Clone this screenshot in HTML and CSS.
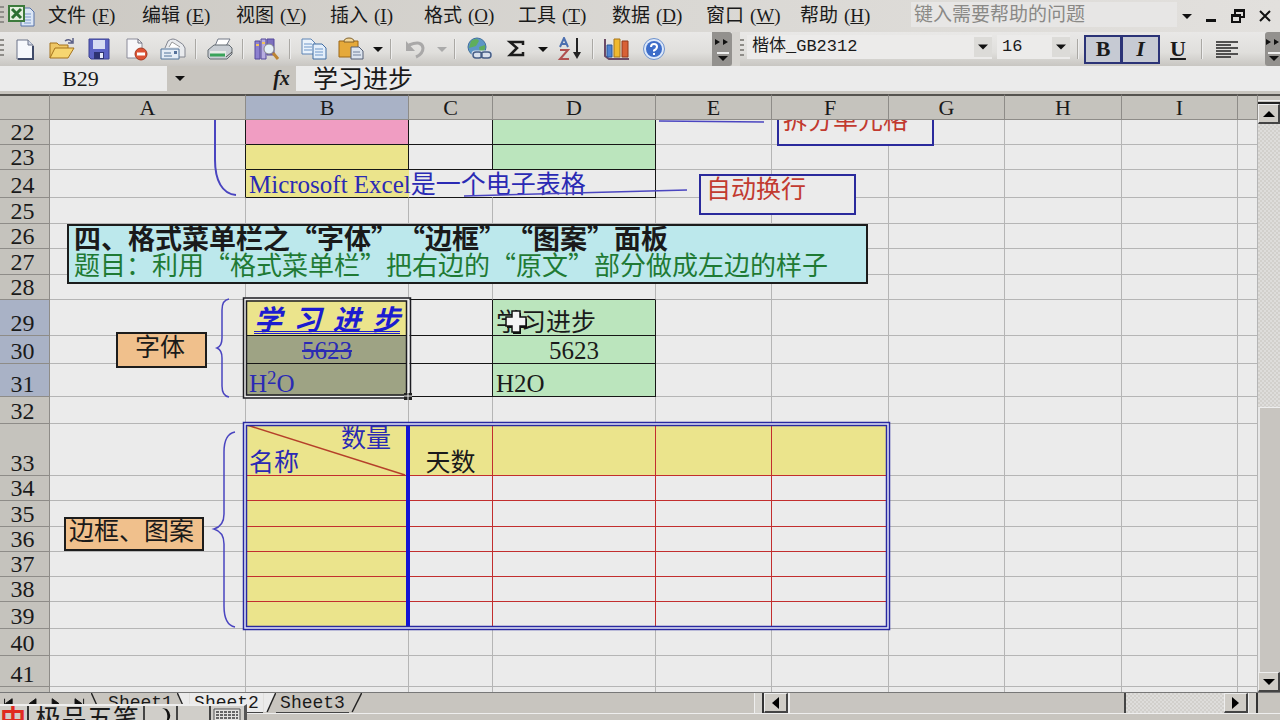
FILE: index.html
```html
<!DOCTYPE html>
<html lang="zh-CN">
<head>
<meta charset="utf-8">
<title>Microsoft Excel</title>
<link rel="stylesheet" href="styles.css">
</head>
<body>
<svg class="defs" width="0" height="0" aria-hidden="true">
  <symbol id="down" viewBox="0 0 10 5"><path d="M0 0h10L5 5z"/></symbol>
</svg>
<header class="menubar">
  <span class="grip"></span>
  <svg class="app-icon" viewBox="0 0 27 22"><path d="M13 3h9l4 4v14H13z" fill="#dbe6f5" stroke="#5672a8"/><path d="M16 9h7M16 12h7M16 15h7M16 18h7" stroke="#7d9acb"/><path d="M1 1h15v15H1z" fill="#e4efe0" stroke="#3c7a3c" stroke-width="2"/><path d="M4 4l9 9M13 4l-9 9" stroke="#2c6f32" stroke-width="3"/></svg>
  <nav class="menus">
    <button>文件<span>(<u>F</u>)</span></button><button>编辑<span>(<u>E</u>)</span></button><button>视图<span>(<u>V</u>)</span></button><button>插入<span>(<u>I</u>)</span></button><button>格式<span>(<u>O</u>)</span></button><button>工具<span>(<u>T</u>)</span></button><button>数据<span>(<u>D</u>)</span></button><button>窗口<span>(<u>W</u>)</span></button><button>帮助<span>(<u>H</u>)</span></button>
  </nav>
  <input class="help" aria-label="帮助" placeholder="键入需要帮助的问题">
  <button class="drop" aria-label="帮助列表"><svg><use href="#down"/></svg></button>
  <button class="win" aria-label="最小化"><svg viewBox="0 0 14 14"><path d="M2 11.5h10" stroke-width="3"/></svg></button>
  <button class="win" aria-label="还原"><svg viewBox="0 0 14 14"><path d="M4 5V1h9v7H9M4 2h9" stroke-width="2"/><path d="M1 6h8v7H1zM1 7h8" stroke-width="2"/></svg></button>
  <button class="win" aria-label="关闭"><svg viewBox="0 0 14 14"><path d="M2 2l10 10M12 2L2 12" stroke-width="2"/></svg></button>
</header>

<div class="toolbars">
  <div class="toolbar standard">
    <span class="grip"></span>
    <button class="tool" aria-label="新建"><svg viewBox="0 0 24 24"><path d="M4 3h11l5 5v14H4z" fill="#f6f8fc" stroke="#6b7288"/><path d="M15 3v5h5" fill="#cfd6e6" stroke="#6b7288"/><path d="M20 9v13H5" fill="none" stroke="#3f4a68" stroke-width="2"/></svg></button>
    <button class="tool" aria-label="打开"><svg viewBox="0 0 26 24"><path d="M1 21V6h7l2 2h9v4" fill="#efc765" stroke="#a5731d"/><path d="M1 21l5-10h19l-6 10z" fill="#f7d670" stroke="#a5731d"/><path d="M16 4q4-3 7 1m1-4v5h-5" fill="none" stroke="#5a5f86" stroke-width="1.5"/></svg></button>
    <button class="tool" aria-label="保存"><svg viewBox="0 0 24 24"><path d="M2 2h20v20H4l-2-2z" fill="#5c63c4" stroke="#3c4292"/><path d="M6 3h12v9H6z" fill="#d7dcf3"/><path d="M7 15h10v7H7z" fill="#2d3272"/><path d="M13 16h3v5h-3z" fill="#e4e8f8"/></svg></button>
    <button class="tool" aria-label="权限"><svg viewBox="0 0 24 24"><path d="M3 2h11l4 4v15H3z" fill="#f7f7fa" stroke="#8b8b99"/><path d="M14 2v4h4" fill="none" stroke="#6d6d7d"/><circle cx="17" cy="17" r="6" fill="#dd5335" stroke="#a53a22"/><path d="M13 17h8" stroke="#fff" stroke-width="3"/></svg></button>
    <button class="tool" aria-label="电子邮件"><svg viewBox="0 0 26 24"><path d="M5 11l3-7q5-4 10 0 6 3 7 7v9H9" fill="#e9ebee" stroke="#82858f"/><path d="M9 10l3-5 8 5" fill="#fff" stroke="#999"/><path d="M1 12h18v10H1z" fill="#e5edf6" stroke="#53749a"/><path d="M4 16h7M4 19h8" stroke="#53749a"/><path d="M14 14h3v3h-3z" fill="#54719a"/></svg></button>
    <i class="sep"></i>
    <button class="tool" aria-label="打印"><svg viewBox="0 0 26 24"><path d="M8 9l3-7h12l-4 7" fill="#fff" stroke="#727986"/><path d="M1 13l6-5h15l3 3v6l-5 5H3l-2-2z" fill="#c9ced4" stroke="#626a70"/><path d="M3 14h16v5H3z" fill="#e7ebe7"/><path d="M3 18h15" stroke="#39a35a" stroke-width="3"/><path d="M19 20l6-5" stroke="#555" /></svg></button>
    <i class="sep"></i>
    <button class="tool" aria-label="信息检索"><svg viewBox="0 0 26 24"><path d="M1 4h5v18H1z" fill="#8d80cf" stroke="#55499b"/><path d="M7 2h5v20H7z" fill="#b7addf" stroke="#55499b"/><path d="M13 2h7v16h-7z" fill="#7d70be" stroke="#55499b"/><path d="M2 8h3M8 6h3" stroke="#f2c35c" stroke-width="2"/><circle cx="15" cy="12" r="5" fill="#e5f0f7" stroke="#888"/><path d="M19 16l5 6" stroke="#bc8432" stroke-width="3"/></svg></button>
    <i class="sep"></i>
    <button class="tool" aria-label="复制"><svg viewBox="0 0 26 24"><path d="M1 2h9l4 4v11H1z" fill="#eaf2fb" stroke="#5f84b4"/><path d="M3 7h8M3 10h8M3 13h8" stroke="#6f97c9"/><path d="M12 7h9l4 4v11H12z" fill="#e3eefa" stroke="#3f6ca3"/><path d="M14 12h8M14 15h8M14 18h8" stroke="#6f97c9"/></svg></button>
    <button class="tool" aria-label="粘贴"><svg viewBox="0 0 26 24"><path d="M1 4h19v16H1z" fill="#e5a93a" stroke="#9b6717"/><path d="M6 5q0-4 5-4t5 4z" fill="#f3d79a" stroke="#80612a"/><path d="M13 10h8l4 4v8H13z" fill="#dce4ee" stroke="#545f75"/><path d="M15 15h7M15 18h8" stroke="#72809a"/></svg></button>
    <button class="drop" aria-label="粘贴选项"><svg><use href="#down"/></svg></button>
    <i class="sep"></i>
    <button class="tool" aria-label="撤消"><svg viewBox="0 0 24 24"><path d="M6 8q13-5 14 3 0 6-7 9" fill="none" stroke="#a9a8a8" stroke-width="3"/><path d="M3 4v10h9z" fill="#a9a8a8"/></svg></button>
    <button class="drop dim" aria-label="撤消列表"><svg><use href="#down"/></svg></button>
    <i class="sep"></i>
    <button class="tool" aria-label="超链接"><svg viewBox="0 0 26 24"><circle cx="11" cy="10" r="9" fill="#5e96c6" stroke="#41719e"/><path d="M5 4q6-4 8 0l-3 5-7 2zM13 10l6-2q1 6-5 8z" fill="#5fae5c"/><path d="M9 17h9m-1 0h7" stroke="#d8e0ec" stroke-width="7" stroke-linecap="round"/><rect x="7" y="15" width="9" height="6" rx="3" fill="none" stroke="#465e86" stroke-width="1.5"/><rect x="15" y="15" width="10" height="6" rx="3" fill="none" stroke="#465e86" stroke-width="1.5"/></svg></button>
    <button class="tool" aria-label="自动求和"><svg viewBox="0 0 24 24"><path d="M19 8V5H6l7 6-7 7h13v-3" fill="none" stroke="#1b1b1b" stroke-width="2.5"/></svg></button>
    <button class="drop" aria-label="函数列表"><svg><use href="#down"/></svg></button>
    <button class="tool" aria-label="升序排序"><svg viewBox="0 0 26 24"><path d="M3 10l4-9 4 9M4 7h6" fill="none" stroke="#4d70b0" stroke-width="2"/><path d="M3 13h8l-8 9h9" fill="none" stroke="#b15050" stroke-width="2"/><path d="M20 1v18" stroke="#222" stroke-width="2"/><path d="M16 15h8l-4 7z" fill="#222"/></svg></button>
    <i class="sep"></i>
    <button class="tool" aria-label="图表向导"><svg viewBox="0 0 26 24"><path d="M1 2v17l4 3h20" fill="none" stroke="#6b4a66" stroke-width="2"/><path d="M3 8h5v12H3z" fill="#4f83d2" stroke="#2b579a"/><path d="M10 2h6v18h-6z" fill="#f0b92f" stroke="#a7741a"/><path d="M18 4h6v16h-6z" fill="#d86137" stroke="#943a1b"/></svg></button>
    <button class="tool" aria-label="帮助"><svg viewBox="0 0 24 24"><circle cx="12" cy="12" r="10.5" fill="#dce8fa" stroke="#6d91cc"/><circle cx="12" cy="12" r="8" fill="#3d6dc9"/><path d="M9 10q0-3 3-3t3 2.500-3 4v1" fill="none" stroke="#fff" stroke-width="2"/><path d="M12 16v2" stroke="#fff" stroke-width="2"/></svg></button>
    <button class="cap" aria-label="工具栏选项"><svg viewBox="0 0 16 28"><path d="M1 4l5 3-5 3zM9 4l5 3-5 3z" fill="#111"/><path d="M3 18h12" stroke="#eee" stroke-width="2"/><path d="M4 21h10l-5 5z" fill="#111"/></svg></button>
  </div>
  <div class="toolbar format">
    <span class="grip"></span>
    <span class="combo face"><select aria-label="字体"><option>楷体_GB2312</option></select><svg><use href="#down"/></svg></span>
    <span class="combo size"><select aria-label="字号"><option>16</option></select><svg><use href="#down"/></svg></span>
    <i class="sep"></i>
    <button class="style on bold">B</button><button class="style on italic">I</button><button class="style under">U</button>
    <i class="sep"></i>
    <button class="tool align" aria-label="左对齐"><svg viewBox="0 0 24 24"><path d="M1 5h22M1 8h15M1 11h22M1 14h15M1 17h22M1 20h15" stroke="#222" stroke-width="1.500"/></svg></button>
    <button class="cap" aria-label="工具栏选项"><svg viewBox="0 0 16 28"><path d="M1 4l5 3-5 3zM9 4l5 3-5 3z" fill="#111"/><path d="M3 18h12" stroke="#eee" stroke-width="2"/><path d="M4 21h10l-5 5z" fill="#111"/></svg></button>
  </div>
</div>

<div class="formula">
  <input class="name" aria-label="名称框" value="B29">
  <button class="drop" aria-label="名称列表"><svg><use href="#down"/></svg></button>
  <button class="fx" aria-label="插入函数"><i>fx</i></button>
  <input class="expr" aria-label="编辑栏" value="学习进步">
</div>

<main class="workspace">
  <div class="sheet">
    <table>
      <colgroup><col class="c0"><col class="ca"><col class="cb"><col class="cc"><col class="cb"><col class="ce"><col class="cf"><col class="ce"><col class="cf"><col class="ce"><col></colgroup>
      <thead><tr class="h26"><th></th><th>A</th><th class="sel">B</th><th>C</th><th>D</th><th>E</th><th>F</th><th>G</th><th>H</th><th>I</th><th></th></tr></thead>
      <tbody>
        <tr class="h25"><th>22</th><td class="kr"></td><td class="k pink"></td><td class="k"></td><td class="k green"></td><td></td><td></td><td></td><td></td><td></td><td></td></tr>
        <tr class="h25"><th>23</th><td class="kr"></td><td class="k yellow"></td><td class="k"></td><td class="k green"></td><td></td><td></td><td></td><td></td><td></td><td></td></tr>
        <tr class="h28"><th>24</th><td class="kr"></td><td class="kb open yellow blue formula-text">Microsoft Excel是一个电子表格</td><td class="kb open"></td><td class="k"></td><td></td><td></td><td></td><td></td><td></td><td></td></tr>
        <tr class="h26"><th>25</th><td></td><td></td><td></td><td></td><td></td><td></td><td></td><td></td><td></td><td></td></tr>
        <tr class="h25"><th>26</th><td></td><td></td><td></td><td></td><td></td><td></td><td></td><td></td><td></td><td></td></tr>
        <tr class="h26"><th>27</th><td></td><td></td><td></td><td></td><td></td><td></td><td></td><td></td><td></td><td></td></tr>
        <tr class="h25"><th>28</th><td></td><td class="kb"></td><td class="kb"></td><td class="kb"></td><td></td><td></td><td></td><td></td><td></td><td></td></tr>
        <tr class="h36"><th class="sel">29</th><td class="kr"></td><td class="k yellow blue fancy">学习进步</td><td class="k"></td><td class="k green">学习进步</td><td></td><td></td><td></td><td></td><td></td><td></td></tr>
        <tr class="h28"><th class="sel">30</th><td class="kr"></td><td class="k shade blue mid"><s>5623</s></td><td class="k"></td><td class="k green mid">5623</td><td></td><td></td><td></td><td></td><td></td><td></td></tr>
        <tr class="h33"><th class="sel">31</th><td class="kr"></td><td class="k shade blue">H<sup>2</sup>O</td><td class="k"></td><td class="k green">H2O</td><td></td><td></td><td></td><td></td><td></td><td></td></tr>
        <tr class="h27"><th>32</th><td></td><td></td><td></td><td></td><td></td><td></td><td></td><td></td><td></td><td></td></tr>
        <tr class="h52 red head"><th>33</th><td></td><td class="blue split"><div>数量</div><div>名称</div></td><td class="mid">天数</td><td></td><td></td><td></td><td></td><td></td><td></td><td></td></tr>
        <tr class="h25 red"><th>34</th><td></td><td></td><td></td><td></td><td></td><td></td><td></td><td></td><td></td><td></td></tr>
        <tr class="h26 red"><th>35</th><td></td><td></td><td></td><td></td><td></td><td></td><td></td><td></td><td></td><td></td></tr>
        <tr class="h25 red"><th>36</th><td></td><td></td><td></td><td></td><td></td><td></td><td></td><td></td><td></td><td></td></tr>
        <tr class="h25 red"><th>37</th><td></td><td></td><td></td><td></td><td></td><td></td><td></td><td></td><td></td><td></td></tr>
        <tr class="h25 red"><th>38</th><td></td><td></td><td></td><td></td><td></td><td></td><td></td><td></td><td></td><td></td></tr>
        <tr class="h27 red"><th>39</th><td></td><td></td><td></td><td></td><td></td><td></td><td></td><td></td><td></td><td></td></tr>
        <tr class="h27"><th>40</th><td></td><td></td><td></td><td></td><td></td><td></td><td></td><td></td><td></td><td></td></tr>
        <tr class="h31"><th>41</th><td></td><td></td><td></td><td></td><td></td><td></td><td></td><td></td><td></td><td></td></tr>
        <tr class="h25"><th></th><td></td><td></td><td></td><td></td><td></td><td></td><td></td><td></td><td></td><td></td></tr>
      </tbody>
    </table>
    <div class="drawings">
      <div class="shape note split-note">拆分单元格</div>
      <div class="shape note wrap-note">自动换行</div>
      <div class="shape banner"><strong>四、格式菜单栏之“字体”“边框”“图案”面板</strong><span>题目：利用“格式菜单栏”把右边的“原文”部分做成左边的样子</span></div>
      <div class="shape tag font-tag">字体</div>
      <div class="shape tag border-tag">边框、图案</div>
      <svg class="ink" width="900" height="540" fill="none">
        <g stroke="#4a45c0" stroke-width="1.500">
          <path d="M215 0V40C215 60 222 74 236 75" stroke-width="2"/>
          <path d="M659 1L764 2M464 76L687 70"/>
          <path d="M229 179Q222 180 222 190V218Q222 226 217 228Q222 230 222 238V266Q222 276 229 277"/>
          <path d="M235 312Q224 314 224 332V394Q224 406 214 409Q224 412 224 424V486Q224 505 235 507"/>
        </g>
        <path d="M247 305L405 355" stroke="#b5402a" stroke-width="1.500"/>
        <path d="M408 305V508" stroke="#1414d4" stroke-width="4"/>
        <g><rect x="245" y="304" width="643" height="204" stroke="#e6e9f8" stroke-width="3"/><rect x="243.500" y="302.500" width="646" height="207" stroke="#2828a0" stroke-width="1.500"/><rect x="246.500" y="305.500" width="640" height="201" stroke="#2828a0" stroke-width="1.500"/></g>
        <g><rect x="245" y="179" width="163" height="98" stroke="#eee" stroke-width="3"/><rect x="243.500" y="178" width="167" height="100" stroke="#1c1c22" stroke-width="1.500"/><rect x="246.500" y="181" width="160" height="94" stroke="#1c1c22" stroke-width="1.500"/><path d="M404 273h8v7h-8z" fill="#222"/><path d="M408 272v8M404 276h8" stroke="#eee"/></g>
        <path d="M512 191h8v6h6v9h-6v6h-8v-6h-6v-9h6z" transform="translate(1 2)" fill="#111"/>
        <path d="M512 191h8v6h6v9h-6v6h-8v-6h-6v-9h6z" fill="#f4f4f4" stroke="#111" stroke-width="1.500"/>
      </svg>
    </div>
  </div>
  <div class="vscroll">
    <i class="vsplit"></i>
    <button class="sb" aria-label="向上"><svg viewBox="0 0 12 6"><path d="M6 0l6 6H0z"/></svg></button>
    <div class="track"></div><div class="thumb"></div>
    <button class="sb" aria-label="向下"><svg viewBox="0 0 12 6"><path d="M0 0h12L6 6z"/></svg></button>
  </div>
</main>

<footer class="tabs">
  <svg class="nav" viewBox="0 0 90 21"><path d="M2 6v10M10 6v10L3 11zM35 6v10l-7-5zM52 6v10l7-5zM76 6v10l7-5zM85 6v10" stroke="#111" fill="#111"/></svg>
  <svg class="slant" viewBox="0 0 13 21"><path d="M0 0l9 20" stroke="#222" stroke-width="1.500"/></svg>
  <button class="tab">Sheet1</button>
  <svg class="slant" viewBox="0 0 13 21"><path d="M0 0h13v21h-5z" fill="#ebebeb"/><path d="M0 0l9 20" stroke="#222" stroke-width="1.500"/></svg>
  <button class="tab active">Sheet2</button>
  <svg class="slant" viewBox="0 0 13 21"><path d="M0 0h13L4 20H0z" fill="#ebebeb"/><path d="M13 0L4 20" stroke="#222" stroke-width="1.500"/></svg>
  <button class="tab">Sheet3</button>
  <svg class="slant" viewBox="0 0 13 21"><path d="M13 0L3 20" stroke="#222" stroke-width="1.500"/></svg>
  <div class="hscroll">
    <i class="hsplit"></i>
    <button class="sb" aria-label="向左"><svg viewBox="0 0 7 12"><path d="M7 0v12L0 6z"/></svg></button>
    <div class="thumb"></div><div class="track"></div>
    <button class="sb" aria-label="向右"><svg viewBox="0 0 7 12"><path d="M0 0v12l7-6z"/></svg></button>
    <i class="hsplit"></i>
  </div>
</footer>
<div class="status"></div>
<div class="ime">
  <b>中</b><span class="ime-name">极品五笔</span>
  <span class="ime-cell"><svg viewBox="0 0 14 20"><path d="M5 2q8 3 4 15q8-7 1-14z" fill="#111"/></svg></span><span class="ime-cell"></span>
  <span class="ime-cell keys"><svg viewBox="0 0 28 18"><path d="M1 3h26v14H1z" fill="#e4e3e0" stroke="#555"/><path d="M3 6h22M3 9h22M3 12h22" stroke="#666" stroke-width="2" stroke-dasharray="3 1"/></svg></span>
</div>
</body>
</html>
```
FILE: styles.css
```css
* { box-sizing: border-box; }
body {
  margin: 0;
  height: 100vh;
  display: flex;
  flex-direction: column;
  overflow: hidden;
  background: #c8c5bf;
  color: #1a1a1a;
  font-family: "Liberation Serif", "Noto Sans CJK SC", serif;
}
button, input, select { font: inherit; color: inherit; border: 0; padding: 0; margin: 0; background: none; outline: 0; border-radius: 0; }
button { display: flex; align-items: center; justify-content: center; white-space: nowrap; }
svg { display: block; flex: none; }
.defs { position: absolute; }
.grip { flex: none; width: 4px; height: 20px; background: repeating-linear-gradient(#8f8d89 0 2px, transparent 2px 5px); }
.drop { flex: none; width: 17px; }
.drop svg { width: 10px; height: 5px; fill: #111; }
.dim svg { fill: #aaa; }

/* menu bar */
.menubar { flex: none; height: 32px; display: flex; align-items: center; background: linear-gradient(90deg, #cbc8c2, #d9d7d3 50%, #e2e0dd); padding-right: 2px; }
.app-icon { width: 27px; height: 22px; margin: 0 13px 0 4px; }
.menus { display: flex; flex: 1; }
.menus button { width: 94px; justify-content: flex-start; font-size: 19px; line-height: 28px; gap: 6px; }
.help { width: 266px; height: 25px; font-size: 19px; padding-left: 3px; background: #e7e6e5; margin-bottom: 3px; }
.help::placeholder { color: #8a8986; opacity: 1; }
.menubar .drop { width: 20px; }
.win { width: 26px; margin-left: 1px; }
.win svg { width: 14px; height: 14px; fill: none; stroke: #111; }

/* toolbars */
.toolbars { flex: none; height: 34px; display: flex; gap: 8px; background: #d6d4d0; }
.toolbar { display: flex; align-items: center; background: linear-gradient(#e9e8e7, #e0dfdc 60%, #c8c6c2); }
.standard { width: 732px; flex: none; }
.standard .grip { margin-right: 2px; }
.format { flex: 1; }
.tool { width: 37px; height: 30px; flex: none; }
.tool svg { width: 26px; height: 24px; }
.sep { flex: none; width: 2px; height: 20px; margin: 0 4px; background: #aaa8a4; border-right: 1px solid #eee; }
.cap { width: 20px; height: 34px; margin-left: auto; background: #93918e; border-radius: 0 3px 3px 0; flex: none; }
.cap svg { width: 16px; height: 28px; }
.combo { display: flex; align-items: center; height: 24px; background: #ecebea; margin: 0 2px 4px 3px; }
.combo select { flex: 1; min-width: 0; appearance: none; font-size: 17px; font-family: "Liberation Mono", "Noto Sans CJK SC", monospace; padding-left: 5px; height: 24px; line-height: 24px; }
.combo svg { width: 18px; height: 20px; padding: 7px 4px; background: #dcdbd8; fill: #111; }
.face { flex: 1; }
.size { width: 73px; }
.format .sep { margin: 0 5px; }
.style { width: 38px; height: 29px; font: bold 22px "Liberation Serif", serif; }
.on { border: 2px solid #2b3377; background: #c6cad3; }
.on + .on { border-left-width: 1px; }
.italic { font-style: italic; }
.under { text-decoration: underline; width: 36px; }
.align { margin-right: 20px; }
.format .cap { width: 15px; border-radius: 3px 0 0 3px; overflow: hidden; justify-content: flex-start; }

/* formula bar */
.formula { flex: none; height: 28px; display: flex; background: #c8c5bf; padding-bottom: 3px; }
.name { width: 167px; background: #ebebeb; text-align: center; font-size: 22px; padding-right: 6px; }
.formula .drop { width: 26px; }
.fx { flex: none; width: 103px; padding-left: 74px; font-size: 20px; font-weight: bold; }
.expr { flex: 1; min-width: 0; background: #ebebeb; padding: 0 0 4px 17px; font-size: 25px; line-height: 21px; }

/* grid */
.workspace { flex: 1; min-height: 0; display: flex; }
.sheet { flex: 1; min-width: 0; position: relative; overflow: hidden; background: #ebebeb; }
table { width: 100%; table-layout: fixed; border-collapse: separate; border-spacing: 0; }
.c0 { width: 50px; } .ca { width: 196px; } .cb { width: 163px; } .cc { width: 84px; } .ce { width: 116px; } .cf { width: 117px; }
.h25 { height: 25px; } .h26 { height: 26px; } .h27 { height: 27px; } .h28 { height: 28px; } .h31 { height: 31px; }
.h33 { height: 33px; } .h36 { height: 36px; } .h52 { height: 52px; }
th, td { padding: 0 3px; border: solid #b5b5b5; border-width: 0 1px 1px 0; line-height: 24px; white-space: nowrap; vertical-align: bottom; text-align: left; }
td { font-size: 25px; }
th { font-weight: normal; font-size: 24px; text-align: center; background: #c5c3bd; border-color: #8e8c88; }
tbody th { padding-right: 7px; }
thead th { border-top: 2px solid #55534f; line-height: 22px; font-size: 22px; }
th.sel { background: #a9b2c6; }
.k, .kr { border-right-color: #161616; }
.k, .kb { border-bottom-color: #161616; }
.open { border-right-color: transparent; }
.pink { background: #f09dc2; }
.yellow, .head td:nth-child(n+3):nth-child(-n+7), .red td:nth-child(3) { background: #ebe48c; }
.green { background: #bbe5bd; }
.shade { background: #9ea384; }
.blue { color: #2a2ab4; }
.mid { text-align: center; }
.red td:nth-child(n+3):nth-child(-n+7) { border-color: #c22e2e; }
.fancy { font: italic bold 28px/32px "Noto Sans CJK SC", sans-serif; color: #1c1cd0; text-align-last: justify; text-decoration: underline double 1px; padding: 0 8px; vertical-align: middle; }
sup { font-size: 19px; line-height: 0; vertical-align: 8px; }
.split div:first-child { text-align: right; padding-right: 14px; }

/* drawing layer over the cells */
.drawings { position: absolute; inset: 26px 0 0; overflow: hidden; pointer-events: none; }
.shape { position: absolute; font-size: 25px; line-height: 28px; white-space: nowrap; border: 2px solid #1c1c1c; }
.note { border-color: #2a2a9c; color: #c23a30; width: 157px; padding-left: 5px; background: #ebebeb; }
.split-note { left: 777px; top: -14px; height: 40px; line-height: 26px; padding-left: 4px; }
.wrap-note { left: 699px; top: 54px; height: 41px; }
.banner { left: 67px; top: 104px; width: 801px; height: 60px; background: #bce8ec; padding: 0 5px; display: flex; flex-direction: column; font-family: "Noto Sans CJK SC", sans-serif; text-spacing-trim: space-all; font-kerning: none; }
.banner strong { font-size: 27px; line-height: 24px; }
.banner span { font-size: 26px; line-height: 28px; color: #1f7a34; }
.tag { background: #f0c08c; }
.font-tag { left: 116px; top: 212px; width: 91px; height: 36px; padding-left: 17px; }
.border-tag { left: 64px; top: 397px; width: 140px; height: 34px; padding-left: 3px; line-height: 26px; }
.ink { position: absolute; left: 0; top: 0; }

/* scroll bars */
.sb { flex: none; background: #cfccc6; border: solid; border-width: 1px 2px 2px 1px; border-color: #eee #444 #444 #eee; }
.thumb { background: #c8c5c0; }
.track { background: repeating-conic-gradient(#d2d0cc 0 25%, #dedddb 0 50%) 0 0 / 4px 4px; }
.vscroll { flex: none; width: 22px; display: flex; flex-direction: column; background: #c8c5bf; border-top: 2px solid #55534f; padding-top: 4px; }
.vsplit { flex: none; height: 4px; border-bottom: 2px solid #222; border-top: 1px solid #eee; }
.vscroll .sb { height: 20px; }
.vscroll .sb svg { width: 12px; height: 6px; }
.vscroll .track { flex: 284; }
.vscroll .thumb { flex: 264; border-left: 2px solid #e8e8e8; border-top: 1px solid #eee; }

/* sheet tabs */
.tabs { flex: none; height: 21px; display: flex; border-top: 1px solid #777; background: #c8c5bf; }
.nav { width: 91px; height: 20px; }
.tab { font: 18px/18px "Liberation Mono", monospace; width: 73px; flex: none; border-bottom: 1px solid #444; }
.tab.active { background: #ebebeb; }
.slant { width: 13px; height: 20px; }
.hscroll { display: flex; width: 504px; margin: 0 22px 0 auto; }
.hsplit { flex: none; width: 10px; border-left: 1px solid #eee; border-right: 2px solid #333; background: #d4d2cd; }
.hscroll .sb { width: 24px; }
.hscroll .sb svg { width: 7px; height: 12px; }
.hscroll .thumb { flex: 338; border-left: 2px solid #eee; border-right: 2px solid #444; }
.hscroll .track { flex: 99; }
.status { flex: none; height: 7px; border-top: 1px solid #eee; background: #c8c5bf; }

/* input method bar floating over the window */
.ime { position: fixed; left: 0; bottom: 0; width: 247px; height: 16px; overflow: hidden; display: flex; background: #d0cec9; border-top: 2px solid #eee; border-right: 3px solid #555; font-size: 26px; line-height: 28px; }
.ime b { width: 29px; color: #e02a20; border-right: 2px solid #333; }
.ime-name { width: 116px; padding-left: 6px; border-right: 2px solid #444; }
.ime-cell { width: 33px; border-right: 2px solid #444; }
.ime-cell svg { width: 14px; height: 20px; margin-left: 12px; }
.keys { border: 0; }
.keys svg { width: 28px; height: 18px; margin: 0 2px; }
```
